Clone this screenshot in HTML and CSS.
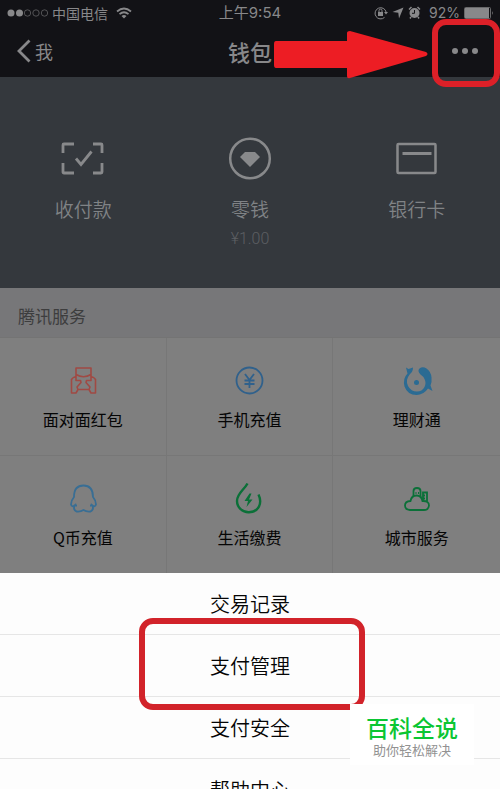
FILE: index.html
```html
<!DOCTYPE html>
<html lang="zh-CN">
<head>
<meta charset="utf-8">
<meta name="viewport" content="width=device-width, initial-scale=1">
<title>钱包</title>
<link rel="stylesheet" href="styles.css">
</head>
<body>
<div class="app">
  <header class="top">
    <div class="status">
      <div class="status-left">
        <svg class="signal" width="42" height="10" viewBox="0 0 42 10" aria-hidden="true"><g fill="#88888a"><circle cx="5" cy="5" r="3.500"/><circle cx="13.500" cy="5" r="3.500"/></g><g fill="none" stroke="#626264" stroke-width=".8"><circle cx="21.500" cy="5" r="3.200"/><circle cx="30" cy="5" r="3.200"/><circle cx="38.500" cy="5" r="3.200"/></g></svg>
        <span>中国电信</span>
        <svg class="wifi" width="16" height="12" viewBox="0 0 16 12" aria-hidden="true"><g fill="none" stroke="#88888a" stroke-width="1.800"><path d="M1 4.500Q8-1.500 15 4.500"/><path d="M3.500 7.200Q8 3.200 12.500 7.200"/></g><path d="M5.500 9Q8 7 10.500 9L8 11.500z" fill="#88888a"/></svg>
      </div>
      <time class="clock">上午9:54</time>
      <div class="status-right">
        <svg width="14" height="14" viewBox="0 0 14 14" aria-hidden="true"><path d="M10.500 11.400A5.600 5.600 0 1 1 12.100 6" fill="none" stroke="#88888a"/><path d="M10 6h4l-2 2.600z" fill="#88888a"/><rect x="4" y="6" width="5" height="4" fill="#88888a"/><path d="M5 6V4.600a1.500 1.500 0 0 1 3 0V6" fill="none" stroke="#88888a"/></svg>
        <svg width="12" height="12" viewBox="0 0 12 12" aria-hidden="true"><path d="M11.500.5L7 11.500 6.300 5.700.5 5z" fill="#88888a"/></svg>
        <svg width="13" height="13" viewBox="0 0 13 13" aria-hidden="true"><circle cx="6.500" cy="7" r="5" fill="#88888a"/><path d="M1 3.500L3.500 1M9.500 1L12 3.500M3 11l-1 1.500M10 11l1 1.500" stroke="#88888a" stroke-width="1.500"/><path d="M6.500 4v3.300H4" fill="none" stroke="#131316"/></svg>
        <span class="percent">92%</span>
        <svg width="30" height="12" viewBox="0 0 30 12" aria-hidden="true"><rect x=".5" y=".5" width="26" height="11" rx="1" fill="none" stroke="#68686a"/><rect x="1" y="1" width="24" height="10" fill="#88888a"/><path d="M28 4q1.500 2 0 4z" fill="#88888a"/></svg>
      </div>
    </div>
    <nav class="nav">
      <a class="back" href="#me"><svg width="14" height="24" viewBox="0 0 14 24" aria-hidden="true"><path d="M12.500 1.500L2 12l10.500 10.500" fill="none" stroke="#88888a" stroke-width="2.800"/></svg><span>我</span></a>
      <h1>钱包</h1>
      <button class="more" type="button" aria-label="更多"><i></i><i></i><i></i></button>
    </nav>
    <svg class="arrow" width="154" height="48" viewBox="0 0 154 48" aria-hidden="true"><path d="M2 10H73V2q0-2 3-2L152 21q3 2 0 4L76 47q-3 1-3-2V37H2q-2 0-2-3V13q0-3 2-3z" fill="#ed1d24"/></svg>
  </header>

  <section class="wallet">
    <a href="#pay"><svg width="44" height="44" viewBox="0 0 44 44" aria-hidden="true"><g fill="none" stroke="#88898b" stroke-width="2.800"><path d="M2 16V8q0-1 1-1h10M32 7h8q1 0 1 1v8M41 26v9q0 1-1 1h-8M13 36H3q-1 0-1-1v-9"/><path d="M15 21.500l5 6L30.500 14.500"/></g></svg><span>收付款</span></a>
    <a href="#balance"><svg width="44" height="44" viewBox="0 0 44 44" aria-hidden="true"><circle cx="22" cy="21.500" r="19.800" fill="none" stroke="#88898b" stroke-width="2.500"/><path d="M17 15h10l5 5-10 10-10-10z" fill="#88898b"/></svg><span>零钱</span><small>¥1.00</small></a>
    <a href="#cards"><svg width="44" height="44" viewBox="0 0 44 44" aria-hidden="true"><rect x="2.500" y="7" width="38" height="29" rx="1" fill="none" stroke="#88898b" stroke-width="2.500"/><path d="M7.500 16.500h29" stroke="#88898b" stroke-width="3"/></svg><span>银行卡</span></a>
  </section>

  <section class="services">
    <h2>腾讯服务</h2>
    <div class="grid">
      <a href="#redpacket"><svg width="32" height="32" viewBox="0 0 32 32" aria-hidden="true"><g fill="none" stroke="#a04a44" stroke-width="1.600" stroke-linejoin="round"><path d="M9 13V4h15v9M9 10.500q7.500 4.500 15 0"/><path d="M9 12.500q-3 .5-4.500 3V29H9l2-3.500h11l2 3.500h4.500V15.500q-1.500-2.500-4.500-3M9 13v3.500h4.500l.5 2-4 4.500 1 2.500M24 13v3.500h-4.500l-.5 2 4 4.500-1 2.500"/></g></svg><span>面对面红包</span></a>
      <a href="#topup"><svg width="32" height="32" viewBox="0 0 32 32" aria-hidden="true"><g fill="none" stroke="#30618c" stroke-width="1.800"><circle cx="16.500" cy="16.500" r="13"/><path d="M12 10l4.500 6 4.500-6M11.500 16.500h10M11.500 20h10M16.500 16v8"/></g></svg><span>手机充值</span></a>
      <a href="#licaitong"><svg width="32" height="32" viewBox="0 0 32 32" aria-hidden="true"><g fill="#2b6b93"><path d="M5 3.500L7.500 5 12 3.500q0 4-3 6.500-5 6-2 12 3 5.500 9 5.500 5 0 7.500-4.500 2-4 0-8-1-2.500-4-4.500-3.500-3.500-1-6 3-2.500 7 0 4.500 3 5 9 .5 4-1 8l2 5.500-4.500-2.500q-4.500 6.500-11.500 6.500-9 0-12-8.500-2-8 3-13z"/><circle cx="15.500" cy="18.500" r="2.500"/></g></svg><span>理财通</span></a>
      <a href="#qcoin"><svg width="32" height="32" viewBox="0 0 32 32" aria-hidden="true"><path d="M7.500 23.500q-2.500 2-3.500-1 0-4 3-7.500 0-11.500 9.500-11.500T26 15q3 3.500 3 7.500-1 3-3.500 1 1.500 4.500-2 6-4 .5-7-1.500-3 2-7 1.500-3.500-1.500-2-6zM7.500 23.500h2.500M25.500 23.500H23" fill="none" stroke="#396e94" stroke-width="1.800"/></svg><span>Q币充值</span></a>
      <a href="#utilities"><svg width="32" height="32" viewBox="0 0 32 32" aria-hidden="true"><path d="M14.500 1.500C11 8 4 11.500 4 19a11.500 11.500 0 0 0 12 11.300c10-.3 13.500-9.300 9.500-17.800" fill="none" stroke="#0b7038" stroke-width="2.400"/><path d="M16.500 11.500L11.500 19h3.500l-1.500 6 6-7.500H16l2.500-6z" fill="#0b7038"/></svg><span>生活缴费</span></a>
      <a href="#city"><svg width="32" height="32" viewBox="0 0 32 32" aria-hidden="true"><g fill="none" stroke="#0b7038" stroke-width="1.800"><path d="M9 28q-5-.3-5-4.500T9.500 19q1-5.500 6-5.500t6 5.500q6.500-.3 6.500 4.500-.5 4.500-5 4.500z"/><path d="M12.500 14V9q0-3 3.500-3t3.500 3v6M22 18v-7.500h4V19M14.500 11h1M17 11h1M22 13.500h2M22 16.500h2"/></g></svg><span>城市服务</span></a>
    </div>
  </section>

  <div class="sheet" role="menu">
    <button type="button" role="menuitem">交易记录</button>
    <button class="marked" type="button" role="menuitem">支付管理</button>
    <button type="button" role="menuitem">支付安全</button>
    <button type="button" role="menuitem">帮助中心</button>
  </div>
  <aside class="brand"><strong>百科全说</strong><span>助你轻松解决</span></aside>
</div>
</body>
</html>
```
FILE: styles.css
```css
*, *::before, *::after { box-sizing: border-box; }
body {
  margin: 0;
  font-family: "Noto Sans CJK SC", sans-serif;
  color: #050505;
}
a { color: inherit; text-decoration: none; }
button { border: 0; margin: 0; padding: 0; background: none; font: inherit; color: inherit; }
svg { display: block; flex: none; }
.app {
  position: relative;
  display: flex;
  flex-direction: column;
  height: 100vh;
  overflow: hidden;
}
.app > * { flex: none; }

.top { position: relative; background: #121216; color: #88888a; }
.status {
  display: grid;
  grid-template-columns: 1fr auto 1fr;
  align-items: center;
  height: 25px;
  padding: 0 6px;
  font-size: 14px;
  line-height: 24px;
}
.status-left, .status-right { display: flex; align-items: center; gap: 4px; }
.wifi { margin-left: 4px; }
.status-right { justify-content: flex-end; }
.percent, .clock { font-family: Inter, "Noto Sans CJK SC", sans-serif; }
.clock { font-size: 15px; }
.percent { margin-left: 4px; }
.nav {
  display: grid;
  grid-template-columns: 1fr auto 1fr;
  align-items: center;
  height: 52px;
  padding: 0 2px;
}
.back { display: flex; align-items: center; gap: 4px; padding-left: 15px; font-size: 18px; line-height: 24px; }
.nav h1 { margin: 0; font-size: 22px; line-height: 26px; font-weight: 500; }
.more {
  position: relative;
  justify-self: end;
  display: flex;
  align-items: center;
  justify-content: center;
  gap: 4px;
  width: 66px;
  height: 52px;
}
.more i { width: 6px; height: 6px; border-radius: 50%; background: #88888a; }
.more::after {
  content: "";
  position: absolute;
  inset: -6px -2px -10px 0;
  border: 6px solid #dc2028;
  border-radius: 14px;
}
.arrow { position: absolute; right: 72px; top: 31px; }

.wallet {
  display: grid;
  grid-template-columns: repeat(3, 1fr);
  height: 211px;
  padding-top: 60px;
  background: #34383d;
}
.wallet a { display: flex; flex-direction: column; align-items: center; }
.wallet span { margin-top: 14px; font-size: 19px; line-height: 28px; font-weight: 350; color: #808386; }
.wallet small { margin-top: 6px; font: 300 16px/20px Roboto, sans-serif; color: #5c5f63; }

.services { background: #7f7f7f; }
.services h2 {
  margin: 0;
  padding: 4px 18px 0;
  height: 50px;
  border-bottom: 1px solid #747474;
  background: #777779;
  color: #3d3d3e;
  font-size: 17px;
  line-height: 48px;
  font-weight: 400;
}
.grid { display: grid; grid-template-columns: repeat(3, 1fr); }
.grid a {
  display: flex;
  flex-direction: column;
  align-items: center;
  gap: 11px;
  height: 118px;
  padding-top: 26px;
  border-right: 1px solid #777;
  border-bottom: 1px solid #777;
}
.grid a:nth-child(3n) { border-right: 0; }
.grid a:nth-child(n+4) { height: 117px; border-bottom: 0; }
.grid span { font-size: 16px; line-height: 24px; }

.sheet { display: flex; flex-direction: column; background: #fdfdfd; }
.sheet button {
  position: relative;
  height: 62px;
  border-bottom: 1px solid #e6e6e6;
  font-size: 20px;
  line-height: 60px;
  font-weight: 350;
}
.marked::after {
  content: "";
  position: absolute;
  left: 50%;
  top: -17px;
  width: 226px;
  height: 92px;
  margin-left: -111px;
  border: 6px solid #d2232a;
  border-radius: 14px;
}
.brand {
  position: absolute;
  right: 26px;
  bottom: 24px;
  display: flex;
  flex-direction: column;
  align-items: center;
  width: 124px;
  height: 61px;
  padding-top: 8px;
  background: #fff;
}
.brand strong { font-size: 23px; line-height: 30px; font-weight: 500; color: #0bc633; }
.brand span { font-size: 13px; line-height: 16px; color: #929292; }
```
